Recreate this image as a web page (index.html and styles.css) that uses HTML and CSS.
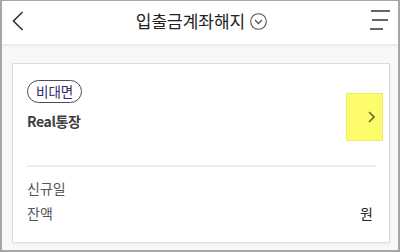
FILE: index.html
```html
<!DOCTYPE html>
<html lang="ko">
<head>
<meta charset="utf-8">
<link rel="stylesheet" href="styles.css">
</head>
<body>
<div class="frame">
  <header class="header">
    <svg class="back" width="12" height="20" viewBox="0 0 12 20"><path d="M10.5 1 L1.5 10 L10.5 19" fill="none" stroke="#333" stroke-width="1.6"/></svg>
    <div class="title">
      <span>입출금계좌해지</span>
      <svg class="drop" width="17" height="17" viewBox="0 0 17 17"><circle cx="8.5" cy="8.5" r="7.8" fill="none" stroke="#555" stroke-width="1.1"/><path d="M5 7 L8.5 10.5 L12 7" fill="none" stroke="#555" stroke-width="1.3"/></svg>
    </div>
    <svg class="menu" width="22" height="20" viewBox="0 0 22 20"><path d="M2 1 H21 M3 10 H19 M1 19 H14" fill="none" stroke="#333" stroke-width="1.6"/></svg>
  </header>
  <main class="main">
    <section class="card">
      <div class="top">
        <div class="info">
          <span class="badge">비대면</span>
          <div class="name">Real통장</div>
        </div>
        <div class="go">
          <svg width="7" height="12" viewBox="0 0 7 12"><path d="M1 1 L6 6 L1 11" fill="none" stroke="#6a6a28" stroke-width="1.6"/></svg>
        </div>
      </div>
      <div class="divider"></div>
      <div class="rows">
        <div class="row"><span class="label">신규일</span><span class="value"></span></div>
        <div class="row"><span class="label">잔액</span><span class="value">원</span></div>
      </div>
    </section>
  </main>
</div>
</body>
</html>
```

FILE: styles.css
```css
* { box-sizing: border-box; }
html, body { margin: 0; padding: 0; }
body {
  font-family: "Noto Sans CJK KR", "Noto Sans", sans-serif;
  background: #fff;
}
.frame {
  width: 400px;
  height: 252px;
  border: 2px solid #a6a6a6;
  border-top-width: 1px;
  display: flex;
  flex-direction: column;
  background: #f8f8f8;
  overflow: hidden;
}
.header {
  height: 43px;
  flex: none;
  background: #fff;
  display: flex;
  align-items: center;
  justify-content: space-between;
  padding: 0 7px 0 10px;
  box-shadow: 0 2px 3px rgba(0,0,0,0.07);
  position: relative;
  z-index: 1;
}
.back { display: block; margin-top: -4px; }
.menu { display: block; margin-top: -5px; }
.title {
  display: flex;
  align-items: center;
  gap: 5px;
  font-size: 17px;
  color: #222;
  margin-top: -4px;
  margin-left: 10px;
}
.drop { display: block; margin-top: 1px; }
.main {
  flex: 1;
  padding: 19px 8px 7px 10px;
}
.card {
  height: 100%;
  background: #fff;
  border: 1px solid #dcdcdc;
  box-shadow: 0 1px 2px rgba(0,0,0,0.05);
  padding: 16px 13px 0 14px;
}
.top {
  display: flex;
  justify-content: space-between;
  align-items: flex-start;
}
.info { display: flex; flex-direction: column; align-items: flex-start; }
.badge {
  display: inline-block;
  border: 1px solid #4a4a5e;
  border-radius: 12px;
  height: 23px;
  line-height: 21px;
  padding: 0 8px;
  font-size: 13.5px;
  color: #2e2e6e;
}
.name {
  margin-top: 8px;
  font-size: 14px;
  font-weight: 700;
  letter-spacing: -0.4px;
  line-height: 20px;
  color: #404040;
}
.go {
  width: 37px;
  height: 48px;
  margin-top: 13px;
  margin-right: -7px;
  background: #fdfd6c;
  border: 1px solid #ecea6a;
  display: flex;
  align-items: center;
  justify-content: flex-end;
  padding-right: 7px;
}
.go svg { display: block; }
.divider {
  height: 2px;
  background: #ececec;
  margin-top: 24px;
}
.rows {
  margin-top: 11px;
  display: flex;
  flex-direction: column;
  gap: 5px;
}
.row {
  display: flex;
  justify-content: space-between;
  font-size: 14px;
  line-height: 20px;
}
.label { color: #555; }
.value { color: #222; margin-right: 3px; }
```
